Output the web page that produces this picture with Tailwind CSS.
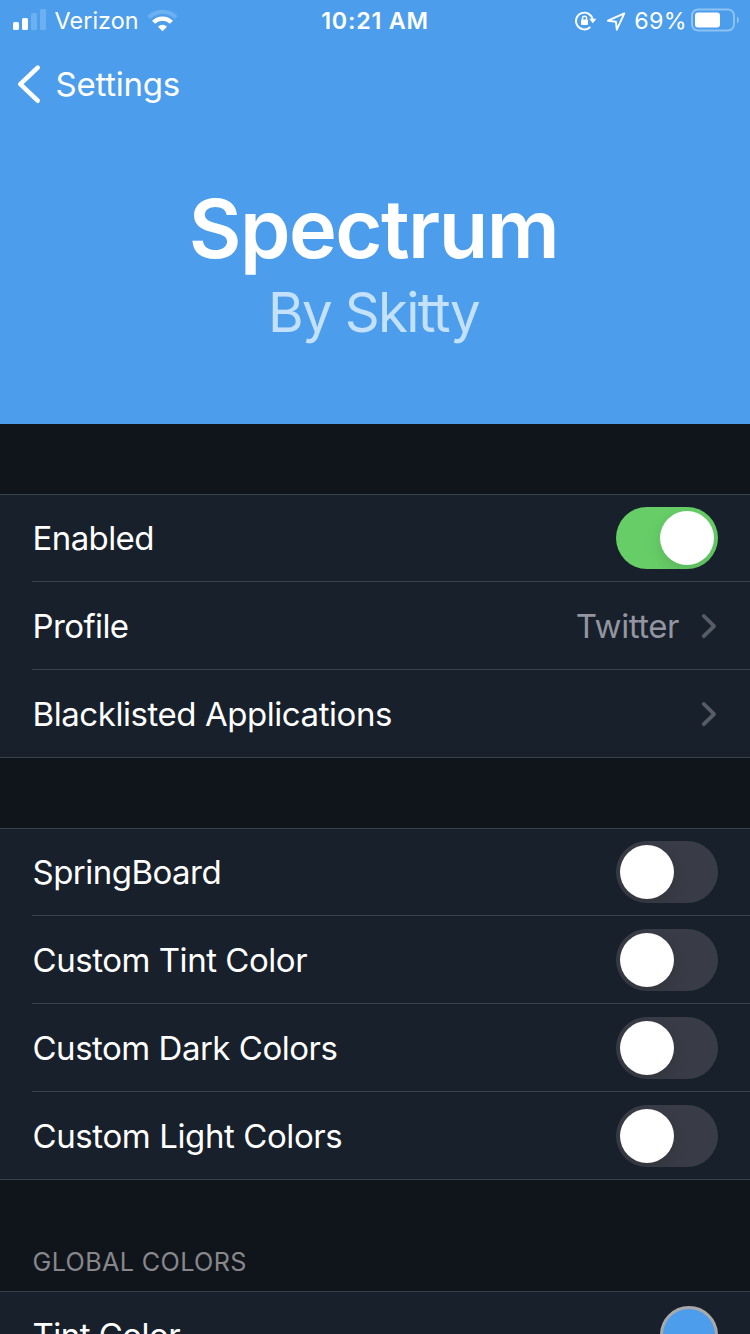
<!DOCTYPE html>
<html lang="en">
<head>
<meta charset="utf-8">
<title>Spectrum</title>
<script src="https://cdn.jsdelivr.net/npm/@tailwindcss/browser@4"></script>
</head>
<body class="h-[1334px] w-[750px] overflow-hidden bg-[#10151c] font-['Inter',sans-serif] text-white">
<header class="h-[424px] bg-[#4c9deb]">
  <!-- Status bar -->
  <div class="flex h-[41px] items-center text-[23.3px] leading-none">
    <div class="flex flex-1 items-center pl-[13px]">
      <svg class="-mt-[2px] h-[21px] w-[33px]" viewBox="0 0 33 21" fill="#fff"><rect y="13" width="6" height="8" rx="1.6"/><rect x="9" y="9" width="6" height="12" rx="1.6"/><g fill="#6bb1f2"><rect x="18" y="4" width="6" height="17" rx="1.6"/><rect x="27" width="6" height="21" rx="1.6"/></g></svg>
      <span class="ml-[8.5px] tracking-[0.09px]">Verizon</span>
      <svg class="ml-[8px] h-[24px] w-[32px]" viewBox="147 9 32 24" fill="none"><path d="M148.85 17.55a19.3 19.3 0 0 1 27.3 0" stroke="#6bb1f2" stroke-width="4.4"/><path d="M153.6 22.3a12.6 12.6 0 0 1 17.8 0" stroke="#fff" stroke-width="4.4"/><path d="M162.5 31.3l-4.5-4.6a6.4 6.4 0 0 1 9 0z" fill="#fff"/></svg>
    </div>
    <div class="mr-[3px] font-semibold tracking-[0.8px]">10:21 AM</div>
    <div class="flex flex-1 items-center justify-end pr-[10px]">
      <svg class="h-[24px] w-[24px]" viewBox="573 8.5 24 24" fill="none" stroke="#fff" stroke-width="1.9"><path d="M590.3 26.5a8.4 8.4 0 1 1 2.4-7.1"/><path d="M589.2 18.3h7.2l-3.6 4.4z" fill="#fff" stroke="none"/><rect x="581" y="19" width="7" height="5.6" rx="1" fill="#fff" stroke="none"/><path d="M582.5 19.4v-1.6a2 2 0 0 1 4 0v1.6" stroke-width="1.5"/></svg>
      <svg class="ml-[8px] h-[24px] w-[22px]" viewBox="605 8.5 22 24" fill="none" stroke="#fff" stroke-width="1.9" stroke-linejoin="round"><path d="M624.3 12.9l-16.4 7.3 8 1 .9 8z"/></svg>
      <span class="ml-[7px] tracking-[0.35px]">69%</span>
      <svg class="-mt-[2px] ml-[3px] h-[24px] w-[50px]" viewBox="690 7.5 50 24" fill="none"><rect x="692" y="9" width="42" height="21" rx="6" stroke="#8cc3f4" stroke-width="2"/><rect x="695" y="12" width="25" height="15" rx="3" fill="#fff"/><path d="M737 16v7c2.6-1.2 2.6-5.8 0-7z" fill="#8cc3f4"/></svg>
    </div>
  </div>
  <!-- Navigation bar -->
  <div class="flex h-[86px] items-center pl-[17px] text-[33px] leading-none">
    <svg class="h-[40px] w-[24px]" viewBox="17 64 24 40" fill="none" stroke="#fff" stroke-width="4.6" stroke-linecap="round" stroke-linejoin="round"><path d="M37.7 67.6L20.3 84.2l17.4 16.5"/></svg>
    <span class="ml-[14.5px] tracking-[-0.23px]">Settings</span>
  </div>
  <div class="pt-[60px] pr-[3px] text-center">
    <h1 class="text-[81px] leading-[84px] font-semibold tracking-[-1.52px]">Spectrum</h1>
    <p class="text-[54.5px] leading-[82px] tracking-[-1.65px] text-[#c3e1fa]">By Skitty</p>
  </div>
</header>

<main class="text-[33px] tracking-[-0.46px]">
  <section class="mt-[70px] bg-[#18202b] shadow-[inset_0_1px_0_#37424b,inset_0_-1px_0_#37424b]">
    <div class="ml-8 flex h-[88px] items-center justify-between pr-8 shadow-[inset_0_-1px_0_#37424b]">
      <span class="pt-[2px] pl-[0.5px] tracking-[-0.6px]">Enabled</span>
      <div class="flex h-[62px] w-[102px] justify-end overflow-hidden rounded-full bg-[#67ce67] p-1"><div class="size-[54px] rounded-full bg-white shadow-[0_6px_16px_rgba(0,0,0,0.12)]"></div></div>
    </div>
    <div class="ml-8 flex h-[88px] items-center pr-8 shadow-[inset_0_-1px_0_#37424b]">
      <span class="flex-1 pt-[2px] pl-[0.5px] tracking-[-0.6px]">Profile</span>
      <span class="pt-[2px] text-[#9395a0]">Twitter</span>
      <svg class="ml-[21px] h-[28px] w-[18px]" viewBox="0 0 18 28" fill="none" stroke="#575c66" stroke-width="3.8" stroke-linecap="round" stroke-linejoin="round"><path d="M3.8 4l10.3 10.1-10.3 10.1"/></svg>
    </div>
    <div class="ml-8 flex h-[88px] items-center justify-between pr-8">
      <span class="pt-[2px] pl-[0.5px] tracking-[-0.44px]">Blacklisted Applications</span>
      <svg class="h-[28px] w-[18px]" viewBox="0 0 18 28" fill="none" stroke="#575c66" stroke-width="3.8" stroke-linecap="round" stroke-linejoin="round"><path d="M3.8 4l10.3 10.1-10.3 10.1"/></svg>
    </div>
  </section>

  <section class="mt-[70px] bg-[#18202b] shadow-[inset_0_1px_0_#37424b,inset_0_-1px_0_#37424b]">
    <div class="ml-8 flex h-[88px] items-center justify-between pr-8 shadow-[inset_0_-1px_0_#37424b]">
      <span class="pt-[2px] pl-[0.5px] tracking-[-0.52px]">SpringBoard</span>
      <div class="flex h-[62px] w-[102px] overflow-hidden rounded-full bg-[#393c46] p-1"><div class="size-[54px] rounded-full bg-white shadow-[0_6px_16px_rgba(0,0,0,0.12)]"></div></div>
    </div>
    <div class="ml-8 flex h-[88px] items-center justify-between pr-8 shadow-[inset_0_-1px_0_#37424b]">
      <span class="pt-[2px] pl-[0.5px]">Custom Tint Color</span>
      <div class="flex h-[62px] w-[102px] overflow-hidden rounded-full bg-[#393c46] p-1"><div class="size-[54px] rounded-full bg-white shadow-[0_6px_16px_rgba(0,0,0,0.12)]"></div></div>
    </div>
    <div class="ml-8 flex h-[88px] items-center justify-between pr-8 shadow-[inset_0_-1px_0_#37424b]">
      <span class="pt-[2px] pl-[0.5px] tracking-[-0.49px]">Custom Dark Colors</span>
      <div class="flex h-[62px] w-[102px] overflow-hidden rounded-full bg-[#393c46] p-1"><div class="size-[54px] rounded-full bg-white shadow-[0_6px_16px_rgba(0,0,0,0.12)]"></div></div>
    </div>
    <div class="ml-8 flex h-[88px] items-center justify-between pr-8">
      <span class="pt-[2px] pl-[0.5px] tracking-[-0.4px]">Custom Light Colors</span>
      <div class="flex h-[62px] w-[102px] overflow-hidden rounded-full bg-[#393c46] p-1"><div class="size-[54px] rounded-full bg-white shadow-[0_6px_16px_rgba(0,0,0,0.12)]"></div></div>
    </div>
  </section>

  <h2 class="h-[111px] pt-[66px] pl-[32.5px] text-[25.2px] leading-[32px] tracking-[0.36px] text-[#88878c]">GLOBAL COLORS</h2>
  <section class="bg-[#18202b] shadow-[inset_0_1px_0_#37424b]">
    <div class="ml-8 flex h-[88px] items-center justify-between pr-8">
      <span class="pt-[2px] pl-[0.5px] tracking-[-0.52px]">Tint Color</span>
      <div class="size-[58px] rounded-full border-3 border-[#a9a9a9] bg-[#4c9deb]"></div>
    </div>
  </section>
</main>
</body>
</html>
